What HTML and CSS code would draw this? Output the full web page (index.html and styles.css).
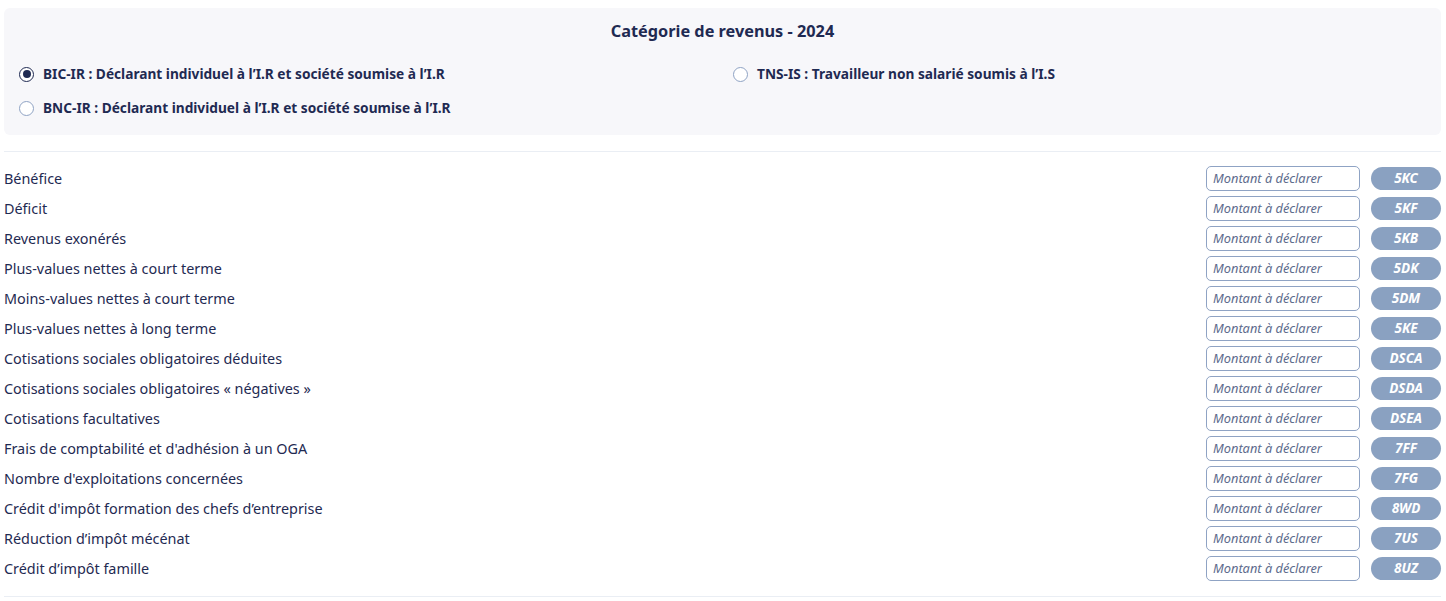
FILE: index.html
```html
<!DOCTYPE html>
<html lang="fr">
<head>
    <meta charset="UTF-8">
    <meta name="viewport" content="width=device-width, initial-scale=1.0">
    <title>Catégorie de revenus</title>
    <link rel="stylesheet" href="styles.css">
</head>
<body>
    <div class="category-box">
        <h2>Catégorie de revenus - 2024</h2>
        <div class="radio-grid">
            <label class="radio-item">
                <input type="radio" name="categorie" value="bic" checked>
                <span>BIC-IR : Déclarant individuel à l’I.R et société soumise à l’I.R</span>
            </label>
            <label class="radio-item">
                <input type="radio" name="categorie" value="tns">
                <span>TNS-IS : Travailleur non salarié soumis à l’I.S</span>
            </label>
            <label class="radio-item">
                <input type="radio" name="categorie" value="bnc">
                <span>BNC-IR : Déclarant individuel à l’I.R et société soumise à l’I.R</span>
            </label>
        </div>
    </div>

    <div class="rows">
        <div class="row"><span class="row-label">Bénéfice</span><input type="text" placeholder="Montant à déclarer"><span class="code">5KC</span></div>
        <div class="row"><span class="row-label">Déficit</span><input type="text" placeholder="Montant à déclarer"><span class="code">5KF</span></div>
        <div class="row"><span class="row-label">Revenus exonérés</span><input type="text" placeholder="Montant à déclarer"><span class="code">5KB</span></div>
        <div class="row"><span class="row-label">Plus-values nettes à court terme</span><input type="text" placeholder="Montant à déclarer"><span class="code">5DK</span></div>
        <div class="row"><span class="row-label">Moins-values nettes à court terme</span><input type="text" placeholder="Montant à déclarer"><span class="code">5DM</span></div>
        <div class="row"><span class="row-label">Plus-values nettes à long terme</span><input type="text" placeholder="Montant à déclarer"><span class="code">5KE</span></div>
        <div class="row"><span class="row-label">Cotisations sociales obligatoires déduites</span><input type="text" placeholder="Montant à déclarer"><span class="code">DSCA</span></div>
        <div class="row"><span class="row-label">Cotisations sociales obligatoires « négatives »</span><input type="text" placeholder="Montant à déclarer"><span class="code">DSDA</span></div>
        <div class="row"><span class="row-label">Cotisations facultatives</span><input type="text" placeholder="Montant à déclarer"><span class="code">DSEA</span></div>
        <div class="row"><span class="row-label">Frais de comptabilité et d'adhésion à un OGA</span><input type="text" placeholder="Montant à déclarer"><span class="code">7FF</span></div>
        <div class="row"><span class="row-label">Nombre d'exploitations concernées</span><input type="text" placeholder="Montant à déclarer"><span class="code">7FG</span></div>
        <div class="row"><span class="row-label">Crédit d'impôt formation des chefs d’entreprise</span><input type="text" placeholder="Montant à déclarer"><span class="code">8WD</span></div>
        <div class="row"><span class="row-label">Réduction d’impôt mécénat</span><input type="text" placeholder="Montant à déclarer"><span class="code">7US</span></div>
        <div class="row"><span class="row-label">Crédit d’impôt famille</span><input type="text" placeholder="Montant à déclarer"><span class="code">8UZ</span></div>
    </div>
</body>
</html>
```

FILE: styles.css
```css
body {
    margin: 0;
    padding: 8px 5px 0 4px;
    font-family: 'Noto Sans', sans-serif;
    color: #1f2a52;
    background: #ffffff;
}

.category-box {
    background: #f7f7fa;
    border-radius: 6px;
    padding: 13px 15px 17px 15px;
}

h2 {
    margin: 0 0 23px 0;
    font-size: 16.3px;
    font-weight: 700;
    line-height: 20px;
    text-align: center;
}

.radio-grid {
    display: grid;
    grid-template-columns: 714px 1fr;
    row-gap: 14px;
}

.radio-item {
    display: flex;
    align-items: center;
    gap: 9px;
    font-size: 13.7px;
    font-weight: 700;
    line-height: 20px;
    cursor: pointer;
}

.radio-item input {
    appearance: none;
    margin: 0;
    width: 15px;
    height: 15px;
    border: 1px solid #8fa3c4;
    border-radius: 50%;
    background: #fff;
    display: grid;
    place-content: center;
}

.radio-item input:checked {
    border: 1.5px solid #1f2a52;
}

.radio-item input:checked::before {
    content: "";
    width: 8px;
    height: 8px;
    border-radius: 50%;
    background: #1f2a52;
}

.rows {
    margin-top: 16px;
    border-top: 1px solid #eaeef4;
    border-bottom: 1px solid #eaeef4;
    padding: 11px 0 13px 0;
}

.row {
    display: flex;
    align-items: center;
    height: 30px;
}

.row-label {
    flex: 1;
    font-size: 14.4px;
}

.row input {
    width: 154px;
    height: 25px;
    box-sizing: border-box;
    border: 1px solid #8fa3c4;
    border-radius: 5px;
    padding: 0 6px;
    font-family: 'Noto Sans', sans-serif;
    font-size: 12.8px;
    color: #1f2a52;
    outline: none;
}

.row input::placeholder {
    color: #5d6b8c;
    font-style: italic;
}

.code {
    margin-left: 11px;
    width: 70px;
    height: 23px;
    line-height: 23px;
    border-radius: 12px;
    background: #8aa1c1;
    color: #fff;
    font-size: 13.5px;
    font-weight: 700;
    font-style: italic;
    text-align: center;
}
```
